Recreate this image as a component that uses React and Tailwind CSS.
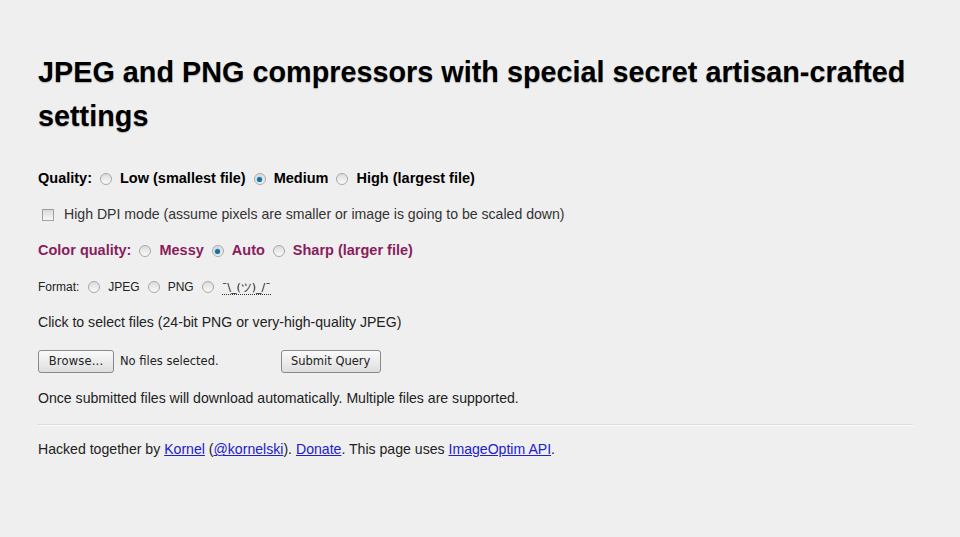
import React from "react";

function Radio({ checked }) {
  return (
    <span className="inline-flex h-[12px] w-[12px] shrink-0 items-center justify-center rounded-full border border-[#a9a9a9] bg-gradient-to-b from-[#dcdcdc] to-[#fafafa]">
      {checked && <span className="h-[5px] w-[5px] rounded-full bg-[#1c6f9a] shadow-[0_0_2px_#3aa0d0]" />}
    </span>
  );
}

function Option({ checked, children, className = "" }) {
  return (
    <span className={"inline-flex items-center gap-[8px] " + className}>
      <Radio checked={checked} />
      <span>{children}</span>
    </span>
  );
}

export default function App() {
  return (
    <div className="min-h-[537px] w-full bg-[#efefef] px-[38px] text-[#111] [font-family:'Liberation_Sans',Arial,sans-serif]">
      <div className="w-[875px]">
        <h1 className="pt-[51px] text-[28.8px] font-bold leading-[43.5px] text-black [text-shadow:0_1px_1px_rgba(0,0,0,0.25)]">
          JPEG and PNG compressors with special secret artisan-crafted settings
        </h1>
        <div className="mt-[23px] flex flex-col">
          <div className="flex h-[36px] items-center gap-[8px] text-[14.5px] font-bold text-black">
            <span>Quality:</span>
            <Option>Low (smallest file)</Option>
            <Option checked>Medium</Option>
            <Option>High (largest file)</Option>
          </div>
          <div className="flex h-[36px] items-center gap-[10px] text-[14.1px] text-[#333]">
            <span className="ml-[4px] h-[12px] w-[12px] border border-[#a0a0a0] bg-gradient-to-b from-[#dadada] to-[#f8f8f8]" />
            <span>High DPI mode (assume pixels are smaller or image is going to be scaled down)</span>
          </div>
          <div className="flex h-[36px] items-center gap-[8px] text-[14.5px] font-bold text-[#8a1c5c]">
            <span>Color quality:</span>
            <Option>Messy</Option>
            <Option checked>Auto</Option>
            <Option>Sharp (larger file)</Option>
          </div>
          <div className="flex h-[36px] items-center gap-[8px] text-[12px] text-[#222]">
            <span className="mr-[1px]">Format:</span>
            <Option className="gap-[6px]">JPEG</Option>
            <Option className="gap-[6px]">PNG</Option>
            <Option className="gap-[4px]">
              <abbr title="whatever" className="border-b border-dotted border-[#333] no-underline text-[11px] leading-[12px] [font-family:'DejaVu_Sans',sans-serif]">
                ¯\_(ツ)_/¯
              </abbr>
            </Option>
          </div>
          <div className="flex h-[36px] items-center text-[14.1px] text-[#222]">
            Click to select files (24-bit PNG or very-high-quality JPEG)
          </div>
          <div className="flex h-[40px] items-center text-[12px] text-[#222] [font-family:'DejaVu_Sans',sans-serif]">
            <span className="flex h-[23px] w-[76px] items-center justify-center rounded-[3px] border border-[#8a8a8a] bg-gradient-to-b from-[#fafafa] to-[#dedede] pt-[2px] text-[11.5px] tracking-[0.2px]">
              Browse...
            </span>
            <span className="ml-[6px] pt-[2px] text-[11.5px]">No files selected.</span>
            <span className="ml-[62px] flex h-[23px] w-[100px] items-center justify-center rounded-[3px] border border-[#8a8a8a] bg-gradient-to-b from-[#fafafa] to-[#dedede] pt-[2px] text-[11.5px]">
              Submit Query
            </span>
          </div>
          <div className="flex h-[36px] items-center text-[14.1px] text-[#222]">
            Once submitted files will download automatically. Multiple files are supported.
          </div>
          <div className="mt-[7px] h-[2px] border-t border-[#dcdcdc] border-b-[#fafafa] border-b" />
          <div className="flex h-[48px] items-center text-[14.1px] text-[#222]">
            <span>
              Hacked together by <a href="#" className="text-[#2020cc] underline">Kornel</a> (<a href="#" className="text-[#2020cc] underline">@kornelski</a>). <a href="#" className="text-[#2020cc] underline">Donate</a>. This page uses <a href="#" className="text-[#2020cc] underline">ImageOptim API</a>.
            </span>
          </div>
        </div>
      </div>
    </div>
  );
}
